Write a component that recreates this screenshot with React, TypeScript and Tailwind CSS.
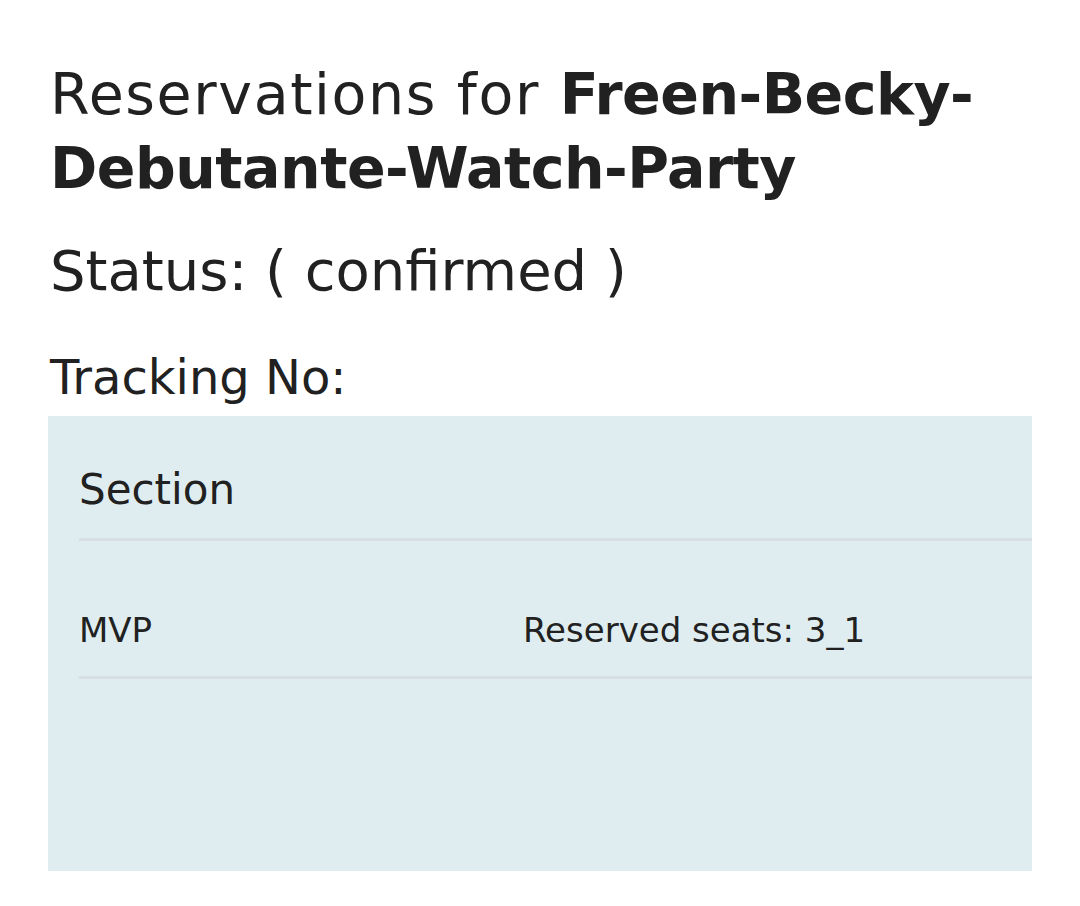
export default function App() {
  return (
    <div className="min-h-[906px] w-[1080px] bg-white text-[#212121]" style={{ fontFamily: '"DejaVu Sans", sans-serif' }}>
      <div className="pl-[50px] pr-[48px] pt-[57px]">
        <h1 className="text-[57px] leading-[74px] font-normal">
          <span className="tracking-[1.6px]">Reservations for </span>
          <span className="font-bold tracking-[-0.5px]">Freen-Becky-Debutante-Watch-Party</span>
        </h1>
        <div className="mt-[26px] text-[56px] leading-[80px]">Status: ( confirmed )</div>
        <div className="mt-[34px] text-[48px] leading-[64px]">Tracking No:</div>
      </div>
      <div className="ml-[48px] mr-[48px] mt-[7px] h-[455px] overflow-hidden bg-[#dfedf0] pl-[31px]">
        <div className="flex h-[125px] items-end border-b-[3px] border-[#d6dfe1] pb-[17px] text-[42px]">Section</div>
        <div className="flex h-[138px] items-end border-b-[3px] border-[#d6dfe1] pb-[20px] text-[34px]">
          <div className="w-[444px]">MVP</div>
          <div>Reserved seats: 3_1</div>
        </div>
      </div>
    </div>
  );
}
